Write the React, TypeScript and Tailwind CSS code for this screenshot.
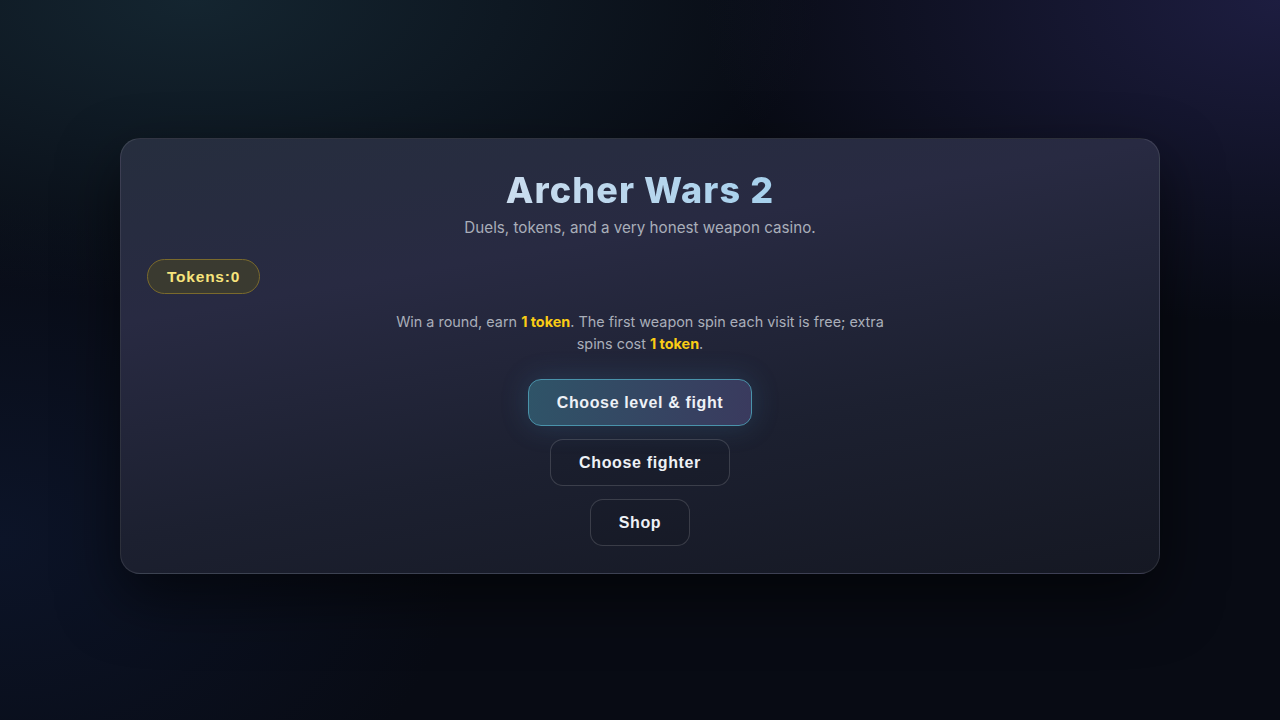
import React from "react";

export default function App() {
  return (
    <div
      className="relative h-[720px] w-[1280px] overflow-hidden bg-[#080b14] [font-family:Inter,'Noto_Sans',sans-serif]"
    >
      <div className="absolute inset-0 bg-[radial-gradient(ellipse_70%_60%_at_15%_0%,#142530_0%,rgba(20,37,48,0)_70%)]" />
      <div className="absolute inset-0 bg-[radial-gradient(ellipse_60%_60%_at_100%_0%,#1d1d40_0%,rgba(29,29,64,0)_75%)]" />
      <div className="absolute inset-0 bg-[radial-gradient(ellipse_45%_60%_at_0%_75%,#0c1428_0%,rgba(12,20,40,0)_80%)]" />
      <div className="relative flex h-full w-full items-start justify-center pt-[138px]">
        <div className="flex h-[436px] w-[1040px] flex-col items-center rounded-[20px] border border-white/10 bg-[linear-gradient(170deg,#262e3e_0%,#282a42_30%,#1c2030_65%,#151823_100%)] px-[26px] pt-[30px] shadow-[0_25px_60px_rgba(0,0,0,0.55)]">
          <h1 className="bg-[linear-gradient(90deg,#cadcee,#a6d0ec)] bg-clip-text text-[36px] font-extrabold leading-[43px] tracking-[0.03em] text-transparent">
            Archer Wars 2
          </h1>
          <p className="mt-[4px] text-[15.2px] leading-[24px] text-[#a9aeb9]">
            Duels, tokens, and a very honest weapon casino.
          </p>
          <div className="mt-[19px] flex w-full">
            <div className="flex h-[35px] items-center rounded-full border border-[#7a6a2c] bg-[#3a3a30] px-[19px] text-[15.5px] font-bold tracking-[0.05em] text-[#f7e47c] [font-family:'Liberation_Sans',Arial,sans-serif]">
              Tokens:0
            </div>
          </div>
          <p className="mt-[17px] max-w-[490px] text-center text-[14.4px] leading-[22px] text-[#a9aeb9]">
            Win a round, earn <b className="font-bold text-[#facc15]">1 token</b>. The first weapon spin each visit is free; extra spins cost{" "}
            <b className="font-bold text-[#facc15]">1 token</b>.
          </p>
          <div className="mt-[24px] flex flex-col items-center gap-[13px] [font-family:'Liberation_Sans',Arial,sans-serif]">
            <button className="h-[47px] rounded-[13px] border border-[#4a93ab] bg-[linear-gradient(100deg,#2f5468,#3a3a5e)] px-[28px] text-[16px] font-bold tracking-[0.04em] text-[#eef1f6] shadow-[0_0_28px_rgba(70,140,190,0.22)]">
              Choose level &amp; fight
            </button>
            <button className="h-[47px] rounded-[13px] border border-white/15 bg-black/5 px-[28px] text-[16px] font-bold tracking-[0.04em] text-[#eef1f6]">
              Choose fighter
            </button>
            <button className="h-[47px] rounded-[13px] border border-white/15 bg-black/5 px-[28px] text-[16px] font-bold tracking-[0.04em] text-[#eef1f6]">
              Shop
            </button>
          </div>
        </div>
      </div>
    </div>
  );
}
